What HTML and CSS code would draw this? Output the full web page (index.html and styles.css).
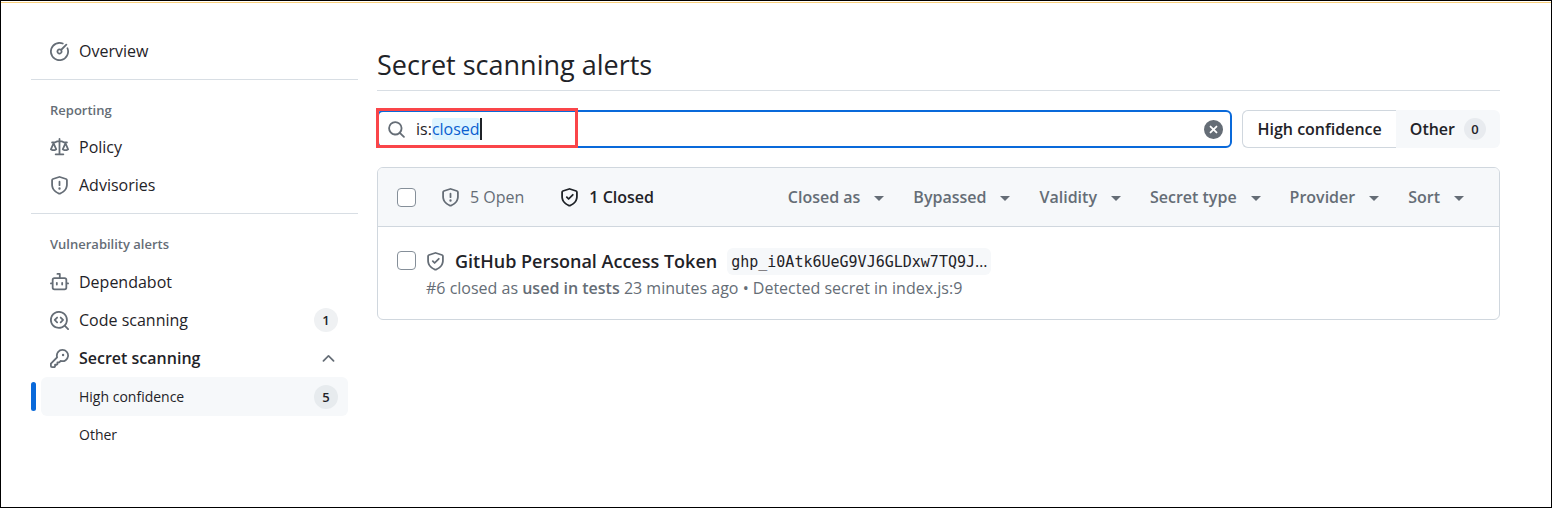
FILE: index.html
```html
<!DOCTYPE html>
<html lang="en">
<head>
<meta charset="utf-8">
<title>Secret scanning alerts</title>
<link rel="stylesheet" href="styles.css">
</head>
<body>
<svg class="sprite" aria-hidden="true">
  <symbol id="meter" viewBox="0 0 16 16"><path d="M8 1.5a6.5 6.5 0 1 0 6.016 4.035.75.75 0 0 1 1.388-.57 8 8 0 1 1-4.37-4.37.75.75 0 1 1-.569 1.389A6.479 6.479 0 0 0 8 1.5Zm6.28.22a.75.75 0 0 1 0 1.06l-4.063 4.064a2.5 2.5 0 1 1-1.06-1.06L13.22 1.72a.75.75 0 0 1 1.06 0ZM7 8a1 1 0 1 0 2 0 1 1 0 0 0-2 0Z"/></symbol>
  <symbol id="law" viewBox="0 0 16 16"><path d="M8.75.75V2h.985c.304 0 .603.08.867.231l1.29.736c.038.022.08.033.124.033h2.234a.75.75 0 0 1 0 1.5h-.427l2.111 4.692a.75.75 0 0 1-.154.838l-.53-.53.529.531-.001.002-.002.002-.006.006-.006.005-.01.01-.045.04c-.21.176-.441.327-.686.45C14.556 10.78 13.88 11 13 11a4.498 4.498 0 0 1-2.023-.454 3.544 3.544 0 0 1-.686-.45l-.045-.04-.016-.015-.006-.006-.004-.004v-.001a.75.75 0 0 1-.154-.838L12.178 4.5h-.162c-.305 0-.604-.079-.868-.231l-1.29-.736a.245.245 0 0 0-.124-.033H8.75V13h2.5a.75.75 0 0 1 0 1.5h-6.5a.75.75 0 0 1 0-1.5h2.5V3.5h-.984a.245.245 0 0 0-.124.033l-1.289.737c-.265.15-.564.23-.869.23h-.162l2.112 4.692a.75.75 0 0 1-.154.838l-.53-.53.529.531-.001.002-.002.002-.006.006-.016.015-.045.04c-.21.176-.441.327-.686.45C4.556 10.78 3.88 11 3 11a4.498 4.498 0 0 1-2.023-.454 3.544 3.544 0 0 1-.686-.45l-.045-.04-.016-.015-.006-.006-.004-.004v-.001a.75.75 0 0 1-.154-.838L2.178 4.5H1.75a.75.75 0 0 1 0-1.5h2.234a.249.249 0 0 0 .125-.033l1.288-.737c.265-.15.564-.23.869-.23h.984V.75a.75.75 0 0 1 1.5 0Zm2.945 8.477c.285.135.718.273 1.305.273s1.02-.138 1.305-.273L13 6.327Zm-10 0c.285.135.718.273 1.305.273s1.02-.138 1.305-.273L3 6.327Z"/></symbol>
  <symbol id="shield" viewBox="0 0 16 16"><path d="M7.467.133a1.748 1.748 0 0 1 1.066 0l5.25 1.68A1.75 1.75 0 0 1 15 3.48V7c0 1.566-.32 3.182-1.303 4.682-.983 1.498-2.585 2.813-5.032 3.855a1.697 1.697 0 0 1-1.33 0c-2.447-1.042-4.049-2.357-5.032-3.855C1.32 10.182 1 8.566 1 7V3.48a1.75 1.75 0 0 1 1.217-1.667Zm.61 1.429a.25.25 0 0 0-.153 0l-5.25 1.68a.25.25 0 0 0-.174.238V7c0 1.358.275 2.666 1.057 3.86.784 1.194 2.121 2.34 4.366 3.297a.196.196 0 0 0 .154 0c2.245-.956 3.582-2.104 4.366-3.298C13.225 9.666 13.5 8.36 13.5 7V3.48a.251.251 0 0 0-.174-.237l-5.25-1.68ZM8.75 4.75v3a.75.75 0 0 1-1.5 0v-3a.75.75 0 0 1 1.5 0ZM9 10.5a1 1 0 1 1-2 0 1 1 0 0 1 2 0Z"/></symbol>
  <symbol id="shield-check" viewBox="0 0 16 16"><path d="M7.467.133a1.748 1.748 0 0 1 1.066 0l5.25 1.68A1.75 1.75 0 0 1 15 3.48V7c0 1.566-.32 3.182-1.303 4.682-.983 1.498-2.585 2.813-5.032 3.855a1.697 1.697 0 0 1-1.33 0c-2.447-1.042-4.049-2.357-5.032-3.855C1.32 10.182 1 8.566 1 7V3.48a1.75 1.75 0 0 1 1.217-1.667Zm.61 1.429a.25.25 0 0 0-.153 0l-5.25 1.68a.25.25 0 0 0-.174.238V7c0 1.358.275 2.666 1.057 3.86.784 1.194 2.121 2.34 4.366 3.297a.196.196 0 0 0 .154 0c2.245-.956 3.582-2.104 4.366-3.298C13.225 9.666 13.5 8.36 13.5 7V3.48a.251.251 0 0 0-.174-.237l-5.25-1.68Zm3.203 4.718-3.5 3.5a.75.75 0 0 1-1.06 0l-1.5-1.5a.75.75 0 1 1 1.06-1.06l.97.97 2.97-2.97a.75.75 0 1 1 1.06 1.06Z"/></symbol>
  <symbol id="dependabot" viewBox="0 0 16 16"><path d="M5.75 7.5a.75.75 0 0 1 .75.75v1.5a.75.75 0 0 1-1.5 0v-1.5a.75.75 0 0 1 .75-.75Zm5.25.75a.75.75 0 0 0-1.5 0v1.5a.75.75 0 0 0 1.5 0v-1.5Z"/><path d="M6.25 0h2A.75.75 0 0 1 9 .75V3.5h3.25a2.25 2.25 0 0 1 2.25 2.25V8h.75a.75.75 0 0 1 0 1.5h-.75v2.75a2.25 2.25 0 0 1-2.25 2.25h-8.5a2.25 2.25 0 0 1-2.25-2.25V9.5H.75a.75.75 0 0 1 0-1.5h.75V5.75A2.25 2.25 0 0 1 3.75 3.5H7.5v-2H6.25a.75.75 0 0 1 0-1.5ZM3 5.75v6.5c0 .414.336.75.75.75h8.5a.75.75 0 0 0 .75-.75v-6.5a.75.75 0 0 0-.75-.75h-8.5a.75.75 0 0 0-.75.75Z"/></symbol>
  <symbol id="codescan" viewBox="0 0 16 16"><path d="M8.47 4.97a.75.75 0 0 0 0 1.06L9.94 7.5 8.47 8.97a.75.75 0 1 0 1.06 1.06l2-2a.75.75 0 0 0 0-1.06l-2-2a.75.75 0 0 0-1.06 0ZM6.53 6.03a.75.75 0 0 0-1.06-1.06l-2 2a.75.75 0 0 0 0 1.06l2 2a.75.75 0 1 0 1.06-1.06L5.06 7.5l1.47-1.47Z"/><path d="M12.246 13.307a7.501 7.501 0 1 1 1.06-1.06l2.474 2.473a.749.749 0 1 1-1.06 1.06ZM1.5 7.5a6 6 0 1 0 12 0 6 6 0 0 0-12 0Z"/></symbol>
  <symbol id="key" viewBox="0 0 16 16"><path d="M10.5 0a5.499 5.499 0 1 1-1.288 10.848l-.932.932a.749.749 0 0 1-.53.22H7v.75a.749.749 0 0 1-.22.53l-.5.5a.749.749 0 0 1-.53.22H5v.75a.749.749 0 0 1-.22.53l-.5.5a.749.749 0 0 1-.53.22h-2A1.75 1.75 0 0 1 0 14.25v-2c0-.199.079-.389.22-.53l4.932-4.932A5.5 5.5 0 0 1 10.5 0Zm-4 5.5c-.001.431.069.86.205 1.269a.75.75 0 0 1-.181.768L1.5 12.56v1.69c0 .138.112.25.25.25h1.69l.06-.06v-1.19a.75.75 0 0 1 .75-.75h1.19l.06-.06v-1.19a.75.75 0 0 1 .75-.75h1.19l1.023-1.025a.75.75 0 0 1 .768-.18A4 4 0 1 0 6.5 5.5ZM11 6a1 1 0 1 1 0-2 1 1 0 0 1 0 2Z"/></symbol>
  <symbol id="search" viewBox="0 0 16 16"><path d="M10.68 11.74a6 6 0 0 1-7.922-8.982 6 6 0 0 1 8.982 7.922l3.04 3.04a.749.749 0 1 1-1.06 1.06ZM11.5 7a4.499 4.499 0 1 0-8.997 0A4.499 4.499 0 0 0 11.5 7Z"/></symbol>
  <symbol id="clear" viewBox="0 0 16 16"><path d="M2.343 13.657A8 8 0 1 1 13.658 2.343 8 8 0 0 1 2.343 13.657ZM6.03 4.97a.751.751 0 0 0-1.042.018.751.751 0 0 0-.018 1.042L6.94 8 4.97 9.97a.749.749 0 1 0 1.06 1.06L8 9.06l1.97 1.97a.749.749 0 1 0 1.06-1.06L9.06 8l1.97-1.97a.749.749 0 1 0-1.06-1.06L8 6.94Z"/></symbol>
  <symbol id="chevron-up" viewBox="0 0 16 16"><path d="M3.22 10.53a.749.749 0 0 1 0-1.06l4.25-4.25a.749.749 0 0 1 1.06 0l4.25 4.25a.749.749 0 1 1-1.06 1.06L8 6.811 4.28 10.53a.749.749 0 0 1-1.06 0Z"/></symbol>
</svg>

<div class="page">
  <nav class="sidebar" aria-label="Security">
    <div class="group">
      <a class="item" href="#overview"><svg class="icon"><use href="#meter"/></svg>Overview</a>
    </div>
    <div class="group">
      <h2 class="group-title">Reporting</h2>
      <a class="item" href="#policy"><svg class="icon"><use href="#law"/></svg>Policy</a>
      <a class="item" href="#advisories"><svg class="icon"><use href="#shield"/></svg>Advisories</a>
    </div>
    <div class="group">
      <h2 class="group-title">Vulnerability alerts</h2>
      <a class="item" href="#dependabot-alerts"><svg class="icon"><use href="#dependabot"/></svg>Dependabot</a>
      <a class="item" href="#code-scanning"><svg class="icon"><use href="#codescan"/></svg>Code scanning<span class="counter item-end">1</span></a>
      <button class="item strong" type="button" aria-expanded="true"><svg class="icon"><use href="#key"/></svg>Secret scanning<svg class="icon item-end"><use href="#chevron-up"/></svg></button>
      <a class="item sub current" href="#high-confidence" aria-current="page">High confidence<span class="counter item-end">5</span></a>
      <a class="item sub" href="#other">Other</a>
    </div>
  </nav>

  <main class="main">
    <h1 class="title">Secret scanning alerts</h1>

    <div class="toolbar">
      <div class="search">
        <label class="search-label" for="filter" aria-label="Filter alerts"><svg class="icon"><use href="#search"/></svg><span>is:</span></label>
        <input class="search-input" id="filter" type="text" value="closed">
        <span class="caret"></span>
        <button class="clear" type="button" aria-label="Clear filter"><svg class="icon"><use href="#clear"/></svg></button>
        <span class="callout"></span>
      </div>
      <div class="segmented">
        <button class="segment selected" type="button">High confidence</button>
        <button class="segment" type="button">Other<span class="counter">0</span></button>
      </div>
    </div>

    <section class="box">
      <header class="box-header">
        <input class="check" type="checkbox" aria-label="Select all alerts">
        <a class="state" href="#open"><svg class="icon"><use href="#shield"/></svg>5 Open</a>
        <a class="state active" href="#closed"><svg class="icon"><use href="#shield-check"/></svg>1 Closed</a>
        <div class="filters">
          <button class="filter" type="button">Closed as</button>
          <button class="filter" type="button">Bypassed</button>
          <button class="filter" type="button">Validity</button>
          <button class="filter" type="button">Secret type</button>
          <button class="filter" type="button">Provider</button>
          <button class="filter" type="button">Sort</button>
        </div>
      </header>
      <article class="alert">
        <input class="check" type="checkbox" aria-label="Select GitHub Personal Access Token">
        <div class="alert-body">
          <div class="alert-line">
            <svg class="icon"><use href="#shield-check"/></svg>
            <a class="alert-title" href="#alert-6">GitHub Personal Access Token</a>
            <code class="token">ghp_i0Atk6UeG9VJ6GLDxw7TQ9J<span class="more">…</span></code>
          </div>
          <p class="meta">#6 closed as <b>used in tests</b> 23 minutes ago • Detected secret in index.js:9</p>
        </div>
      </article>
    </section>
  </main>
</div>
</body>
</html>
```
FILE: styles.css
```css
* { box-sizing: border-box; }

body {
  margin: 0;
  min-height: 100vh;
  border: 1px solid #000;
  background: #fff;
  color: #1f2328;
  font: 16px/24px "Open Sans", "Noto Sans", sans-serif;
}

a { color: inherit; text-decoration: none; }
button { font: inherit; color: inherit; background: none; border: 0; padding: 0; cursor: pointer; }
h1, h2, p { margin: 0; }

.sprite { display: none; }
.icon { width: 19px; height: 19px; flex: none; fill: #656d76; }

.page {
  display: flex;
  gap: 19px;
  margin-top: 1px;
  padding: 29px 51px 24px 30px;
  border-top: 1px solid #f8cf7c;
}

/* Sidebar */
.sidebar { flex: none; width: 327px; }
.group { padding-bottom: 9px; }
.group + .group { border-top: 1px solid #d8dee4; }
.group:last-child .group-title { padding-bottom: 1px; }
.group-title {
  padding: 12px 19px 0;
  font-size: 13px;
  line-height: 36px;
  font-weight: 600;
  color: #656d76;
}
.item {
  position: relative;
  display: flex;
  align-items: center;
  gap: 10px;
  width: calc(100% - 20px);
  height: 38px;
  margin-left: 10px;
  padding: 0 10px 0 9px;
  border-radius: 6px;
  text-align: left;
}
.item-end { margin-left: auto; }
.strong { font-weight: 600; }
.sub { padding-left: 38px; font-size: 14px; }
.current { background: #f6f8fa; height: 39px; }
.current::before {
  content: "";
  position: absolute;
  left: -10px;
  top: 5px;
  bottom: 5px;
  width: 5px;
  border-radius: 3px;
  background: #0969da;
}
.counter {
  min-width: 24px;
  height: 24px;
  border-radius: 12px;
  background: #eff1f3;
  font-size: 13px;
  font-weight: 600;
  text-align: center;
}
.current .counter { background: #e7ebee; }

/* Main column */
.main { flex: 1; min-width: 0; padding-top: 12px; }
.title {
  padding-bottom: 5px;
  border-bottom: 1px solid #d8dee4;
  font-size: 27px;
  line-height: 41px;
  font-weight: 400;
}

.toolbar { display: flex; gap: 10px; margin: 19px 0; }
.search {
  position: relative;
  flex: 1;
  display: flex;
  align-items: center;
  height: 38px;
  padding: 0 7px 0 8px;
  border: 2px solid #0969da;
  border-radius: 6px;
}
.search-label { display: flex; align-items: center; gap: 10px; }
.search-input {
  field-sizing: content;
  height: 22px;
  padding: 0;
  border: 0;
  border-radius: 3px;
  outline: 0;
  background: #ddf4ff;
  color: #0a5fd0;
  font: inherit;
}
.caret { width: 2px; height: 22px; background: #1f2328; }
.clear { display: flex; margin-left: auto; }
.callout {
  position: absolute;
  left: -3px;
  top: -4px;
  width: 202px;
  height: 40px;
  border: 3px solid #fa4549;
  pointer-events: none;
}
.segmented {
  display: flex;
  border-radius: 6px;
  background: #f6f8fa;
}
.segment {
  display: flex;
  align-items: center;
  gap: 9px;
  height: 38px;
  padding: 0 14px;
  font-weight: 600;
}
.segment.selected {
  border: 1px solid #d0d7de;
  border-right: 0;
  border-radius: 6px 0 0 6px;
  background: #fff;
}
.segment .counter { min-width: 22px; height: 22px; line-height: 22px; background: #e8ebef; }

/* Alerts list */
.box { border: 1px solid #d0d7de; border-radius: 6px; overflow: hidden; }
.box-header {
  display: flex;
  align-items: center;
  height: 59px;
  padding: 0 35px 0 19px;
  border-bottom: 1px solid #d0d7de;
  background: #f6f8fa;
}
.check {
  appearance: none;
  flex: none;
  width: 19px;
  height: 19px;
  margin: 0;
  border: 1px solid #858f99;
  border-radius: 4px;
  background: #fff;
}
.state { display: flex; align-items: center; gap: 10px; margin-left: 25px; color: #656d76; }
.state.active { margin-left: 36px; color: #1f2328; font-weight: 600; }
.state.active .icon { fill: #1f2328; }
.filters { display: flex; gap: 29px; margin-left: auto; }
.filter {
  display: flex;
  align-items: center;
  gap: 14px;
  color: #656d76;
  font-weight: 600;
}
.filter::after {
  content: "";
  margin-top: 3px;
  border: 5px solid transparent;
  border-top-color: #656d76;
  border-bottom: 0;
}
.alert { display: flex; gap: 10px; padding: 20px 19px 18px; }
.alert > .check { margin-top: 4px; }
.alert-line { display: flex; align-items: center; gap: 10px; }
.alert-title { font-size: 18px; line-height: 28px; font-weight: 600; }
.token {
  padding: 0 4px;
  border-radius: 6px;
  background: #f6f8fa;
  font: 15px/26px "DejaVu Sans Mono", "Liberation Mono", monospace;
}
.more { font-family: "Open Sans", sans-serif; font-size: 16px; }
.meta { line-height: 26px; color: #656d76; }
.meta b { font-weight: 600; }
```
